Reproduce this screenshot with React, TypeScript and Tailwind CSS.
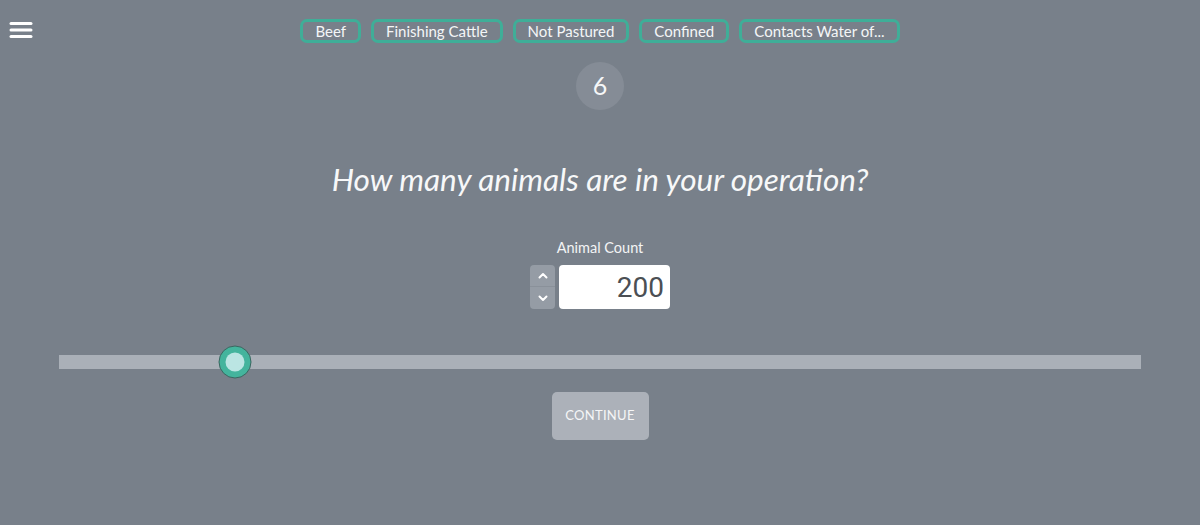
import { useState } from "react";

const tags = ["Beef", "Finishing Cattle", "Not Pastured", "Confined", "Contacts Water of..."];

function MenuIcon() {
  return (
    <svg width="24" height="18" viewBox="0 0 24 18" aria-hidden>
      <rect x="0.5" y="1" width="23" height="3" rx="1.5" fill="#ffffff" />
      <rect x="0.5" y="7.5" width="23" height="3" rx="1.5" fill="#ffffff" />
      <rect x="0.5" y="14" width="23" height="3" rx="1.5" fill="#ffffff" />
    </svg>
  );
}

function Chevron({ up }: { up?: boolean }) {
  return (
    <svg width="10" height="7" viewBox="0 0 10 7" aria-hidden>
      <path
        d={up ? "M1.5 5.5 L5 2 L8.5 5.5" : "M1.5 1.5 L5 5 L8.5 1.5"}
        fill="none"
        stroke="#ffffff"
        strokeWidth="2"
        strokeLinecap="round"
        strokeLinejoin="round"
      />
    </svg>
  );
}

export default function App() {
  const [count, setCount] = useState(200);
  const max = 1230;
  const pct = (count / max) * 100;

  return (
    <div className="relative min-h-screen bg-[#78808a] font-['Lato','Open_Sans',sans-serif] text-white">
      <button className="absolute left-[9px] top-[21px]" aria-label="Menu">
        <MenuIcon />
      </button>

      <div className="flex justify-center gap-[10px] pt-[19px]">
        {tags.map((tag) => (
          <span
            key={tag}
            className="flex h-[24px] items-center rounded-[7px] border-[3px] border-[#3fae98] px-[12px] text-[15px] leading-none text-[#f4f6f7]"
          >
            {tag}
          </span>
        ))}
      </div>

      <div className="mt-[19px] flex justify-center">
        <div className="flex h-[48px] w-[48px] items-center justify-center rounded-full bg-[#858c96] text-[25px] text-[#f6f7f8]">
          6
        </div>
      </div>

      <h1 className="mt-[54px] text-center text-[31.5px] italic leading-none text-[#f7f8f9]">
        How many animals are in your operation?
      </h1>

      <div className="mt-[45px] flex flex-col items-center">
        <label className="text-[14.5px] leading-none text-[#f3f4f5]" htmlFor="animal-count">
          Animal Count
        </label>
        <div className="mt-[10px] flex gap-[4px]">
          <div className="flex w-[25px] flex-col overflow-hidden rounded-[4px] bg-[#959ca5]">
            <button
              className="flex h-[22px] items-center justify-center border-b border-[#8a919a]"
              onClick={() => setCount((c) => Math.min(max, c + 1))}
            >
              <Chevron up />
            </button>
            <button
              className="flex h-[22px] items-center justify-center"
              onClick={() => setCount((c) => Math.max(0, c - 1))}
            >
              <Chevron />
            </button>
          </div>
          <input
            id="animal-count"
            className="h-[44px] w-[111px] rounded-[4px] bg-white px-[6px] text-right font-['Roboto',sans-serif] text-[28px] text-[#4b4f54] outline-none"
            value={count}
            onChange={(e) => setCount(Number(e.target.value) || 0)}
          />
        </div>
      </div>

      <div className="mt-[46px] px-[59px]">
        <div className="relative h-[14px] bg-[#aab0b8]">
          <div
            className="absolute top-1/2 flex h-[33px] w-[33px] -translate-x-1/2 -translate-y-1/2 items-center justify-center rounded-full border border-[#3b6660] bg-[#44b49d]"
            style={{ left: `${pct}%` }}
          >
            <div className="h-[19px] w-[19px] rounded-full bg-[#bbe5e3]" />
          </div>
        </div>
      </div>

      <div className="mt-[23px] flex justify-center">
        <button className="h-[48px] w-[97px] rounded-[5px] bg-[#acb1b9] text-[13px] uppercase tracking-[0.3px] text-[#f5f6f7]">
          Continue
        </button>
      </div>
    </div>
  );
}
